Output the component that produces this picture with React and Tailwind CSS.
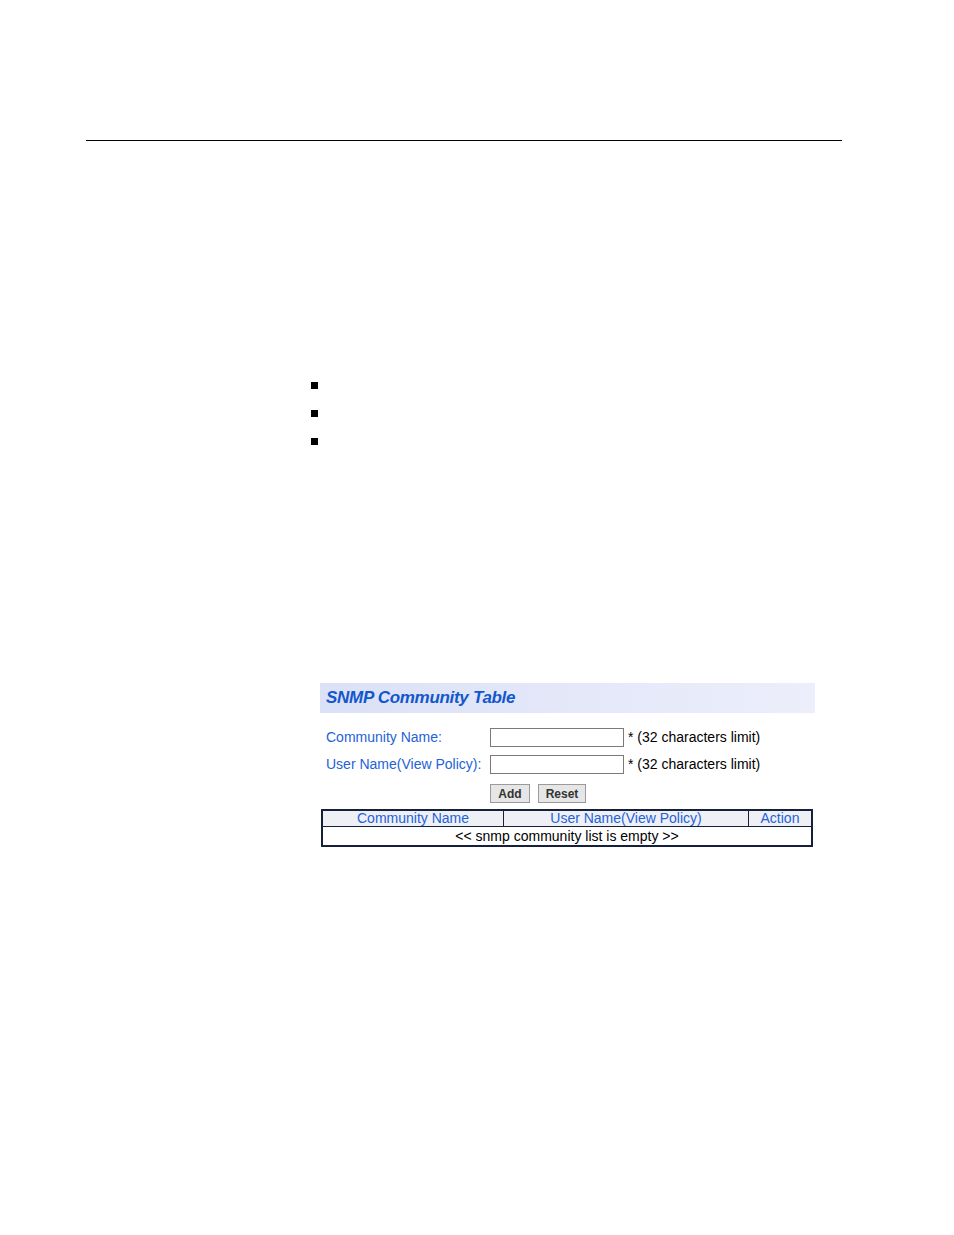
export default function App() {
  const font = { fontFamily: '"Liberation Sans", Arial, sans-serif' };
  return (
    <div className="w-[954px] h-[1235px] bg-white relative" style={font}>
      <div className="pt-[140px] pl-[86px]">
        <div className="w-[756px] h-px bg-black" />
      </div>

      <div className="pl-[311px] pt-[241px] flex flex-col gap-[21px]">
        <div className="w-[7px] h-[7px] bg-black" />
        <div className="w-[7px] h-[7px] bg-black" />
        <div className="w-[7px] h-[7px] bg-black" />
      </div>

      <div className="ml-[320px] mt-[238px] w-[495px]">
        <div className="h-[30px] bg-gradient-to-r from-[#dbe1f6] to-[#eceefb] flex items-center pl-[6px]">
          <span className="text-[17px] font-bold italic text-[#1257cc] tracking-[-0.3px]">
            SNMP Community Table
          </span>
        </div>

        <div className="mt-[15px] flex items-center h-[19px]">
          <div className="w-[170px] pl-[6px] text-[14px] text-[#2462d8]">Community Name:</div>
          <div className="w-[134px] h-[19px] border border-[#7a7a7a] bg-white" />
          <div className="ml-[4px] text-[14px] text-black">* (32 characters limit)</div>
        </div>
        <div className="mt-[8px] flex items-center h-[19px]">
          <div className="w-[170px] pl-[6px] text-[14px] text-[#2462d8]">User Name(View Policy):</div>
          <div className="w-[134px] h-[19px] border border-[#7a7a7a] bg-white" />
          <div className="ml-[4px] text-[14px] text-black">* (32 characters limit)</div>
        </div>

        <div className="mt-[10px] flex gap-[8px] pl-[170px]">
          <button className="w-[40px] h-[19px] bg-[#e6e6e6] border border-[#9a9a9a] text-[12px] font-bold text-[#333] leading-none">
            Add
          </button>
          <button className="w-[48px] h-[19px] bg-[#e6e6e6] border border-[#9a9a9a] text-[12px] font-bold text-[#333] leading-none">
            Reset
          </button>
        </div>

        <div className="mt-[6px] ml-[1px] w-[492px] border-2 border-[#15203a]">
          <div className="flex h-[16px] bg-[#eef0f6] border-b border-[#15203a] text-[14px] text-[#2462d8] leading-[14px]">
            <div className="w-[181px] text-center border-r border-[#15203a]">Community Name</div>
            <div className="w-[245px] text-center border-r border-[#15203a]">User Name(View Policy)</div>
            <div className="flex-1 text-center">Action</div>
          </div>
          <div className="h-[18px] text-[14px] text-black text-center leading-[18px]">
            &lt;&lt; snmp community list is empty &gt;&gt;
          </div>
        </div>
      </div>
    </div>
  );
}
